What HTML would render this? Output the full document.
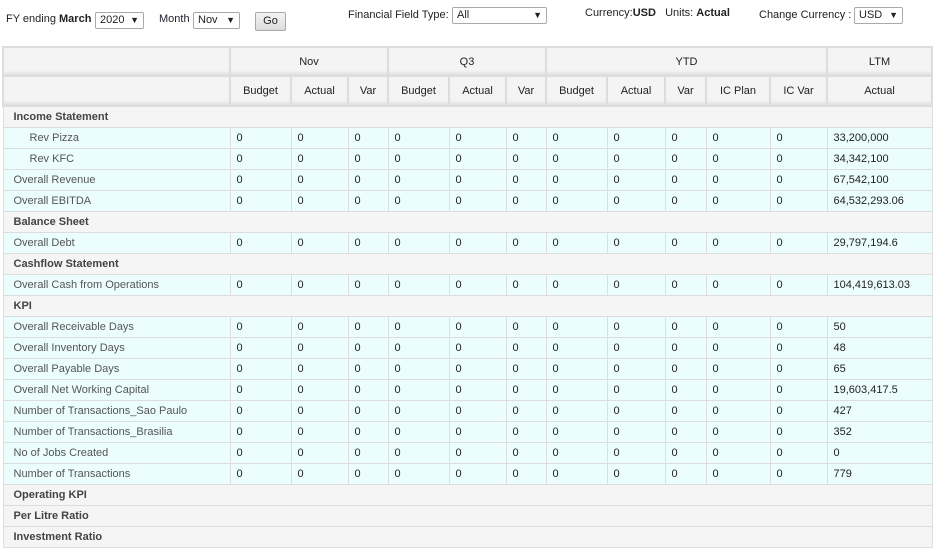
<!DOCTYPE html>
<html><head><meta charset="utf-8"><style>
body{margin:0;width:935px;height:550px;background:#fff;font-family:"Liberation Sans",Arial,sans-serif;font-size:11px;color:#222;position:relative;overflow:hidden}
.ab{position:absolute;white-space:nowrap}
.sel{position:absolute;border:1px solid #a9a9a9;border-radius:2px;background:#fff;height:15px;font-size:11px;line-height:15px;padding-left:4px;box-sizing:content-box}
.sel i{position:absolute;right:4px;top:0;font-style:normal;font-size:9px}
.go{position:absolute;left:255px;top:12px;width:29px;height:17px;border:1px solid #a9a9a9;border-radius:2px;background:linear-gradient(#f4f4f4,#dcdcdc);text-align:center;line-height:17px;font-size:11px}
table{position:absolute;left:2px;top:46px;border-collapse:collapse;table-layout:fixed;width:929px}
td,th{padding:0;font-size:11px;overflow:hidden;white-space:nowrap}
th{font-weight:normal;background:#f4f4f4;border:2px solid #ddd;height:28px;color:#222;box-shadow:inset 0 -4px 3px -2px #ddd}
tr.r1 th{height:27px}
tr.h td{height:20px;border:1px solid #ddd;background:#f5f5f5;font-weight:bold;color:#444;padding-left:10px}
tr.d td{height:20px;border:1px solid #ddd;background:#ebfdfd;padding-left:6px}
tr.d td:first-child{color:#555;padding-left:10px}
tr.d.s td:first-child{padding-left:26px}
</style></head><body>
<div class="ab" style="left:6px;top:13px">FY ending <b>March</b></div>
<div class="sel" style="left:95px;top:12px;width:43px">2020<i>▼</i></div>
<div class="ab" style="left:159px;top:13px;color:#223">Month</div>
<div class="sel" style="left:193px;top:12px;width:41px">Nov<i>▼</i></div>
<div class="go">Go</div>
<div class="ab" style="left:348px;top:9px">Financial Field Type:</div>
<div class="sel" style="left:452px;top:7px;width:89px">All<i>▼</i></div>
<div class="ab" style="left:585px;top:7px">Currency:<b>USD</b>&nbsp;&nbsp; Units: <b>Actual</b></div>
<div class="ab" style="left:759px;top:9px">Change Currency :</div>
<div class="sel" style="left:854px;top:7px;width:43px">USD<i>▼</i></div>
<table>
<colgroup><col style="width:227px"><col style="width:61px"><col style="width:57px"><col style="width:40px"><col style="width:61px"><col style="width:57px"><col style="width:40px"><col style="width:61px"><col style="width:58px"><col style="width:41px"><col style="width:64px"><col style="width:57px"><col style="width:105px"></colgroup>
<tr class="r1"><th></th><th colspan="3">Nov</th><th colspan="3">Q3</th><th colspan="5">YTD</th><th>LTM</th></tr>
<tr><th></th><th>Budget</th><th>Actual</th><th>Var</th><th>Budget</th><th>Actual</th><th>Var</th><th>Budget</th><th>Actual</th><th>Var</th><th>IC Plan</th><th>IC Var</th><th>Actual</th></tr>
<tr class="h"><td colspan="13">Income Statement</td></tr>
<tr class="d s"><td>Rev Pizza</td><td>0</td><td>0</td><td>0</td><td>0</td><td>0</td><td>0</td><td>0</td><td>0</td><td>0</td><td>0</td><td>0</td><td>33,200,000</td></tr>
<tr class="d s"><td>Rev KFC</td><td>0</td><td>0</td><td>0</td><td>0</td><td>0</td><td>0</td><td>0</td><td>0</td><td>0</td><td>0</td><td>0</td><td>34,342,100</td></tr>
<tr class="d"><td>Overall Revenue</td><td>0</td><td>0</td><td>0</td><td>0</td><td>0</td><td>0</td><td>0</td><td>0</td><td>0</td><td>0</td><td>0</td><td>67,542,100</td></tr>
<tr class="d"><td>Overall EBITDA</td><td>0</td><td>0</td><td>0</td><td>0</td><td>0</td><td>0</td><td>0</td><td>0</td><td>0</td><td>0</td><td>0</td><td>64,532,293.06</td></tr>
<tr class="h"><td colspan="13">Balance Sheet</td></tr>
<tr class="d"><td>Overall Debt</td><td>0</td><td>0</td><td>0</td><td>0</td><td>0</td><td>0</td><td>0</td><td>0</td><td>0</td><td>0</td><td>0</td><td>29,797,194.6</td></tr>
<tr class="h"><td colspan="13">Cashflow Statement</td></tr>
<tr class="d"><td>Overall Cash from Operations</td><td>0</td><td>0</td><td>0</td><td>0</td><td>0</td><td>0</td><td>0</td><td>0</td><td>0</td><td>0</td><td>0</td><td>104,419,613.03</td></tr>
<tr class="h"><td colspan="13">KPI</td></tr>
<tr class="d"><td>Overall Receivable Days</td><td>0</td><td>0</td><td>0</td><td>0</td><td>0</td><td>0</td><td>0</td><td>0</td><td>0</td><td>0</td><td>0</td><td>50</td></tr>
<tr class="d"><td>Overall Inventory Days</td><td>0</td><td>0</td><td>0</td><td>0</td><td>0</td><td>0</td><td>0</td><td>0</td><td>0</td><td>0</td><td>0</td><td>48</td></tr>
<tr class="d"><td>Overall Payable Days</td><td>0</td><td>0</td><td>0</td><td>0</td><td>0</td><td>0</td><td>0</td><td>0</td><td>0</td><td>0</td><td>0</td><td>65</td></tr>
<tr class="d"><td>Overall Net Working Capital</td><td>0</td><td>0</td><td>0</td><td>0</td><td>0</td><td>0</td><td>0</td><td>0</td><td>0</td><td>0</td><td>0</td><td>19,603,417.5</td></tr>
<tr class="d"><td>Number of Transactions_Sao Paulo</td><td>0</td><td>0</td><td>0</td><td>0</td><td>0</td><td>0</td><td>0</td><td>0</td><td>0</td><td>0</td><td>0</td><td>427</td></tr>
<tr class="d"><td>Number of Transactions_Brasilia</td><td>0</td><td>0</td><td>0</td><td>0</td><td>0</td><td>0</td><td>0</td><td>0</td><td>0</td><td>0</td><td>0</td><td>352</td></tr>
<tr class="d"><td>No of Jobs Created</td><td>0</td><td>0</td><td>0</td><td>0</td><td>0</td><td>0</td><td>0</td><td>0</td><td>0</td><td>0</td><td>0</td><td>0</td></tr>
<tr class="d"><td>Number of Transactions</td><td>0</td><td>0</td><td>0</td><td>0</td><td>0</td><td>0</td><td>0</td><td>0</td><td>0</td><td>0</td><td>0</td><td>779</td></tr>
<tr class="h"><td colspan="13">Operating KPI</td></tr>
<tr class="h"><td colspan="13">Per Litre Ratio</td></tr>
<tr class="h"><td colspan="13">Investment Ratio</td></tr>
</table>
</body></html>
